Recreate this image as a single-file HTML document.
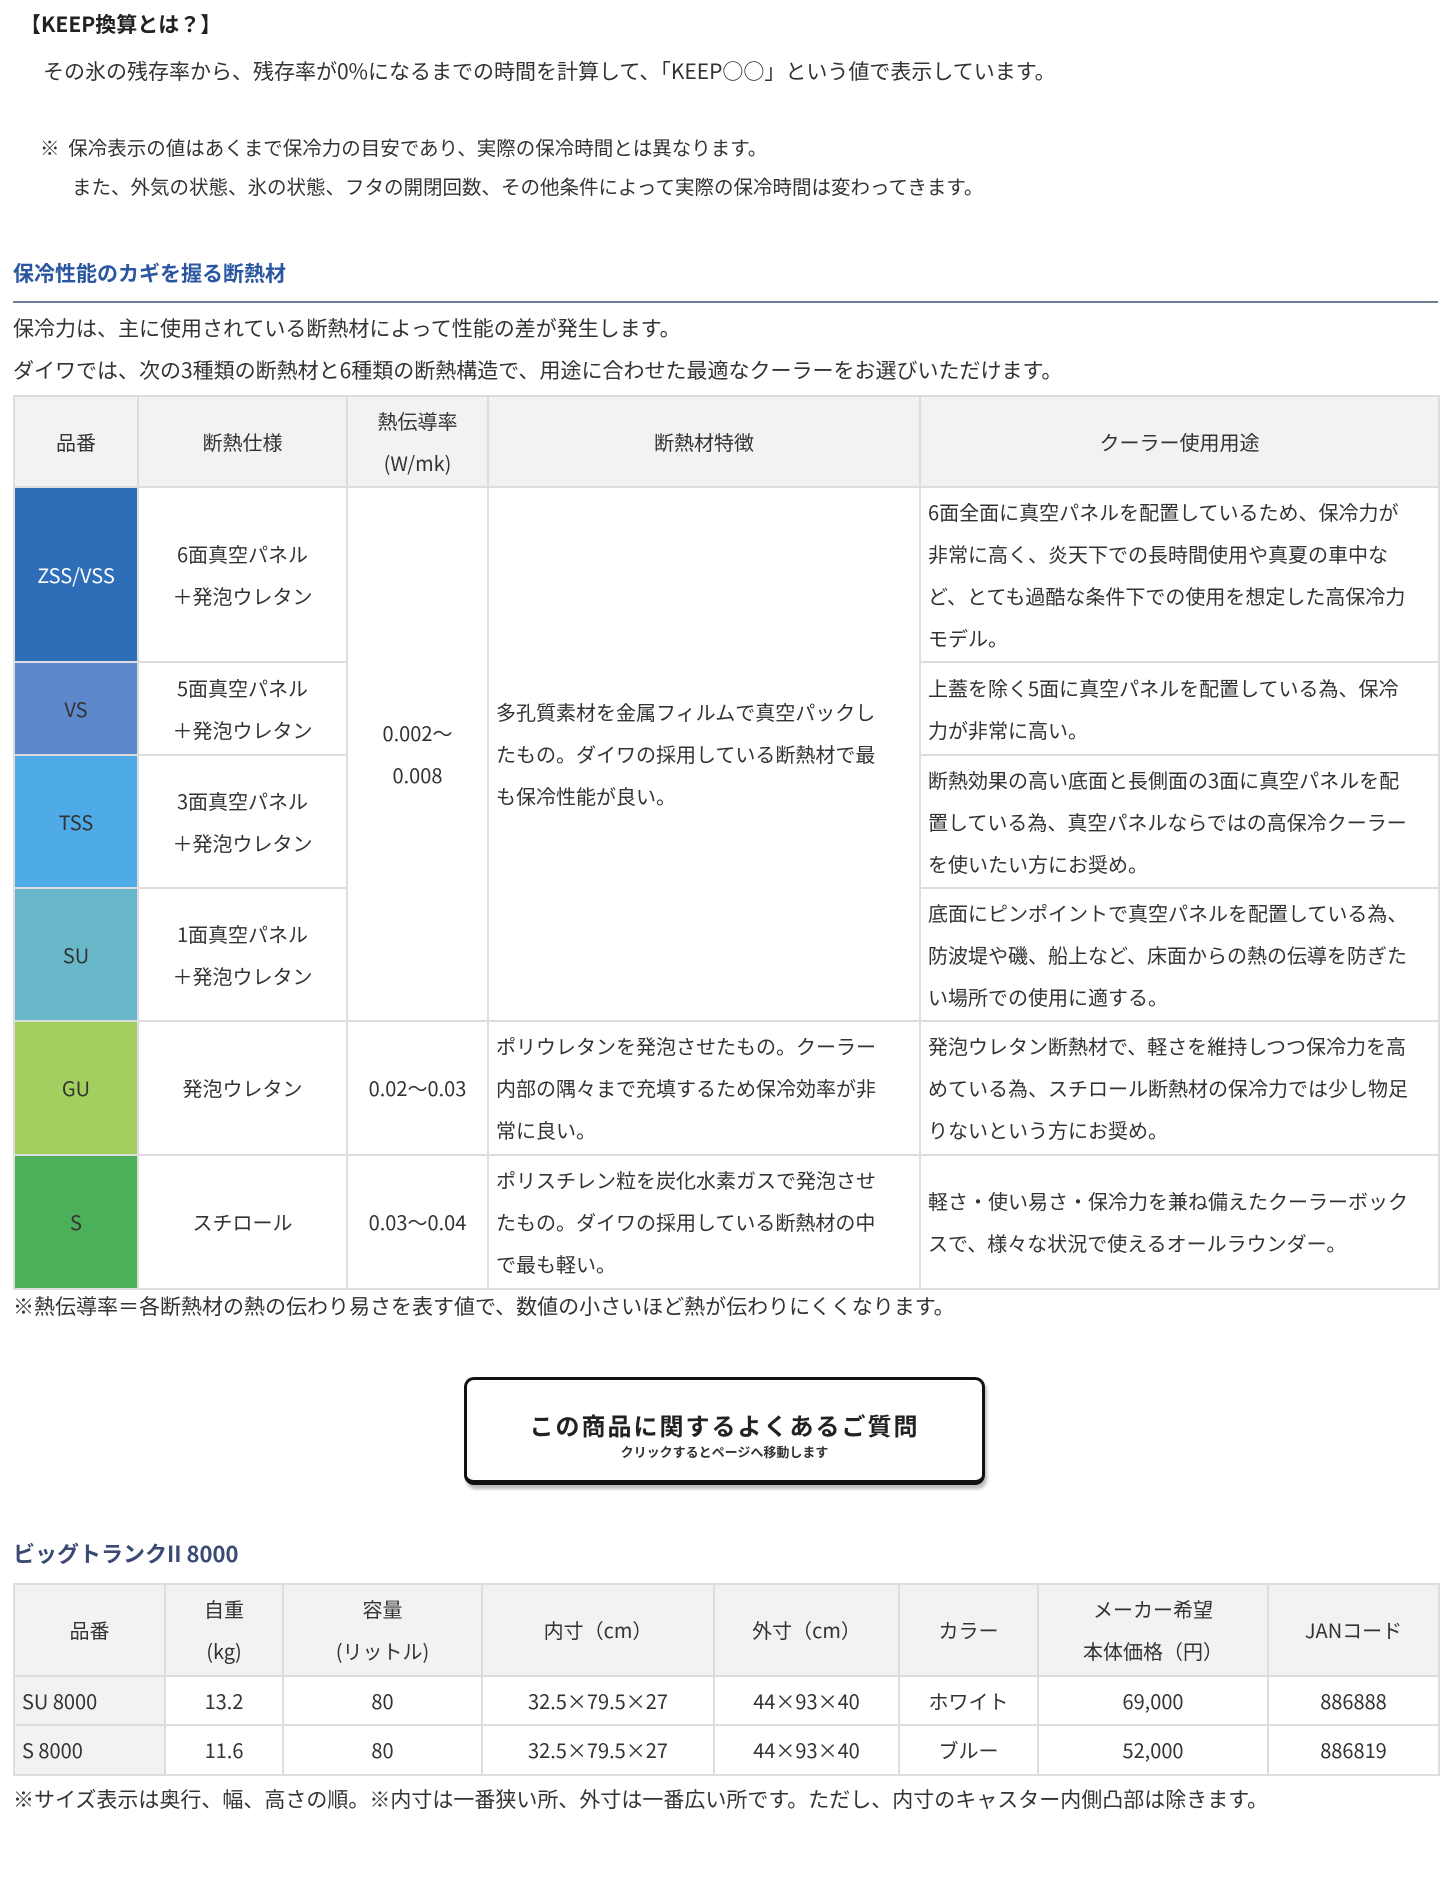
<!DOCTYPE html>
<html><head><meta charset="utf-8">
<style>
*{margin:0;padding:0;box-sizing:border-box}
body{width:1452px;height:1880px;background:#fff;color:#333;font-family:"Noto Sans CJK JP","Liberation Sans",sans-serif;font-size:20px;position:relative;overflow:hidden}
.a{position:absolute;white-space:nowrap;line-height:1}
table{position:absolute;border-collapse:collapse;table-layout:fixed}
td{border:2px solid #ddd;text-align:center;vertical-align:middle;font-size:20px;line-height:42px;padding:0}
.h td{background:#f2f2f2}
.l{text-align:left;padding-left:7px}
.c{color:#fff}
</style></head><body>
<div class="a" style="left:20px;top:14px;font-size:21px;font-weight:bold;color:#222">【KEEP換算とは？】</div>
<div class="a" style="left:43px;top:61px;font-size:21px">その氷の残存率から、残存率が0%になるまでの時間を計算して、「KEEP○○」という値で表示しています。</div>
<div class="a" style="left:40px;top:137px;font-size:19.5px">※&nbsp;&nbsp;保冷表示の値はあくまで保冷力の目安であり、実際の保冷時間とは異なります。</div>
<div class="a" style="left:72px;top:176px;font-size:19.5px">また、外気の状態、氷の状態、フタの開閉回数、その他条件によって実際の保冷時間は変わってきます。</div>
<div class="a" style="left:13px;top:263px;font-size:21px;font-weight:bold;color:#2b56a0">保冷性能のカギを握る断熱材</div>
<div style="position:absolute;left:13px;top:301px;width:1425px;height:2px;background:#6f7f97"></div>
<div class="a" style="left:13px;top:318px;font-size:21px">保冷力は、主に使用されている断熱材によって性能の差が発生します。</div>
<div class="a" style="left:13px;top:360px;font-size:21px">ダイワでは、次の3種類の断熱材と6種類の断熱構造で、用途に合わせた最適なクーラーをお選びいただけます。</div>
<table style="left:13px;top:395px;width:1425px">
<colgroup><col style="width:124px"><col style="width:209px"><col style="width:141px"><col style="width:432px"><col style="width:519px"></colgroup>
<tr class="h" style="height:91px"><td>品番</td><td>断熱仕様</td><td>熱伝導率<br>(W/mk)</td><td>断熱材特徴</td><td>クーラー使用用途</td></tr>
<tr style="height:175px"><td class="c" style="background:#2e6db8">ZSS/VSS</td><td>6面真空パネル<br>＋発泡ウレタン</td><td rowspan="4">0.002～<br>0.008</td><td rowspan="4" class="l">多孔質素材を金属フィルムで真空パックし<br>たもの。ダイワの採用している断熱材で最<br>も保冷性能が良い。</td><td class="l">6面全面に真空パネルを配置しているため、保冷力が<br>非常に高く、炎天下での長時間使用や真夏の車中な<br>ど、とても過酷な条件下での使用を想定した高保冷力<br>モデル。</td></tr>
<tr style="height:93px"><td style="background:#5e88cc">VS</td><td>5面真空パネル<br>＋発泡ウレタン</td><td class="l">上蓋を除く5面に真空パネルを配置している為、保冷<br>力が非常に高い。</td></tr>
<tr style="height:133px"><td style="background:#4eabe8">TSS</td><td>3面真空パネル<br>＋発泡ウレタン</td><td class="l">断熱効果の高い底面と長側面の3面に真空パネルを配<br>置している為、真空パネルならではの高保冷クーラー<br>を使いたい方にお奨め。</td></tr>
<tr style="height:133px"><td style="background:#68b8c9">SU</td><td>1面真空パネル<br>＋発泡ウレタン</td><td class="l">底面にピンポイントで真空パネルを配置している為、<br>防波堤や磯、船上など、床面からの熱の伝導を防ぎた<br>い場所での使用に適する。</td></tr>
<tr style="height:134px"><td style="background:#a3cf5e">GU</td><td>発泡ウレタン</td><td>0.02～0.03</td><td class="l">ポリウレタンを発泡させたもの。クーラー<br>内部の隅々まで充填するため保冷効率が非<br>常に良い。</td><td class="l">発泡ウレタン断熱材で、軽さを維持しつつ保冷力を高<br>めている為、スチロール断熱材の保冷力では少し物足<br>りないという方にお奨め。</td></tr>
<tr style="height:134px"><td style="background:#4caf5a">S</td><td>スチロール</td><td>0.03～0.04</td><td class="l">ポリスチレン粒を炭化水素ガスで発泡させ<br>たもの。ダイワの採用している断熱材の中<br>で最も軽い。</td><td class="l">軽さ・使い易さ・保冷力を兼ね備えたクーラーボック<br>スで、様々な状況で使えるオールラウンダー。</td></tr>
</table>
<div class="a" style="left:13px;top:1296px;font-size:21px">※熱伝導率＝各断熱材の熱の伝わり易さを表す値で、数値の小さいほど熱が伝わりにくくなります。</div>
<div style="position:absolute;left:464px;top:1377px;width:521px;height:108px;border:3px solid #111;border-bottom-width:5px;border-radius:10px;box-shadow:2px 4px 3px #bbb;text-align:center">
<div style="margin-top:29px;font-size:24px;line-height:32px;font-weight:bold;letter-spacing:2px;color:#222">この商品に関するよくあるご質問</div>
<div style="margin-top:3px;font-size:13px;line-height:16px;font-weight:bold;color:#333">クリックするとページへ移動します</div>
</div>
<div class="a" style="left:13px;top:1542px;font-size:22px;font-weight:bold;color:#3b4a75">ビッグトランクII 8000</div>
<table style="left:13px;top:1583px;width:1425px">
<colgroup><col style="width:151px"><col style="width:118px"><col style="width:199px"><col style="width:232px"><col style="width:185px"><col style="width:139px"><col style="width:230px"><col style="width:171px"></colgroup>
<tr class="h" style="height:92px"><td>品番</td><td>自重<br>(kg)</td><td>容量<br>(リットル)</td><td>内寸（cm）</td><td>外寸（cm）</td><td>カラー</td><td>メーカー希望<br>本体価格（円）</td><td>JANコード</td></tr>
<tr style="height:49px"><td class="l" style="background:#f2f2f2">SU 8000</td><td>13.2</td><td>80</td><td>32.5×79.5×27</td><td>44×93×40</td><td>ホワイト</td><td>69,000</td><td>886888</td></tr>
<tr style="height:50px"><td class="l" style="background:#f2f2f2">S 8000</td><td>11.6</td><td>80</td><td>32.5×79.5×27</td><td>44×93×40</td><td>ブルー</td><td>52,000</td><td>886819</td></tr>
</table>
<div class="a" style="left:13px;top:1789px;font-size:21px">※サイズ表示は奥行、幅、高さの順。※内寸は一番狭い所、外寸は一番広い所です。ただし、内寸のキャスター内側凸部は除きます。</div>
</body></html>
